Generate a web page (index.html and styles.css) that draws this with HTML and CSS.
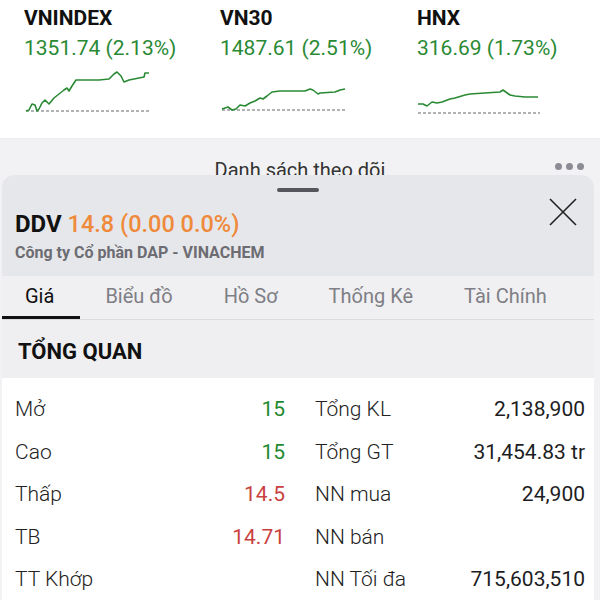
FILE: index.html
```html
<!DOCTYPE html>
<html lang="vi">
<head>
<meta charset="utf-8">
<link rel="stylesheet" href="styles.css">
</head>
<body>
<div class="page">
  <section class="indices">
    <div class="index">
      <div class="idx-name">VNINDEX</div>
      <div class="idx-value">1351.74 (2.13%)</div>
      <svg class="spark" width="135" height="56" viewBox="0 0 135 56">
        <line x1="2" y1="51" x2="126" y2="51" class="base"/>
        <polyline class="line" points="2,51 5,50 8,44 11,45 13,51 15,49 18,43 21,40 25,44 30,38 35,34 40,30 43,28 45,31 48,26 52,20 75,20 85,19 90,14 93,12 97,16 100,22 105,20 115,18 120,17 121,13 125,13"/>
      </svg>
    </div>
    <div class="index">
      <div class="idx-name">VN30</div>
      <div class="idx-value">1487.61 (2.51%)</div>
      <svg class="spark" width="135" height="56" viewBox="0 0 135 56">
        <line x1="2" y1="50" x2="125" y2="50" class="base"/>
        <polyline class="line" points="2,49 8,47 12,50 16,49 20,45 25,46 30,43 35,41 40,38 43,39 47,36 52,32 60,31 85,31 90,29 93,30 98,34 100,33 115,32 120,30 125,29"/>
      </svg>
    </div>
    <div class="index">
      <div class="idx-name">HNX</div>
      <div class="idx-value">316.69 (1.73%)</div>
      <svg class="spark" width="135" height="56" viewBox="0 0 135 56">
        <line x1="1" y1="53" x2="123" y2="53" class="base"/>
        <polyline class="line" points="1,44 6,44 10,46 15,42 20,43 25,42 33,39 38,38 48,35 53,34 83,32 86,30 93,35 98,36 108,37 121,37"/>
      </svg>
    </div>
  </section>

  <section class="watch">
    <div class="watch-title">Danh sách theo dõi</div>
    <div class="dots"><span></span><span></span><span></span></div>
  </section>

  <div class="sheet">
    <header class="sheet-head">
      <div class="handle"></div>
      <div class="head-row">
        <div class="head-info">
          <div class="title"><span class="sym">DDV</span> <span class="price">14.8 (0.00 0.0%)</span></div>
          <div class="company">Công ty Cổ phần DAP - VINACHEM</div>
        </div>
        <svg class="close" width="30" height="30" viewBox="0 0 30 30">
          <path d="M2 2 L28 28 M28 2 L2 28" />
        </svg>
      </div>
    </header>

    <nav class="tabs">
      <div class="tab active">Giá</div>
      <div class="tab">Biểu đồ</div>
      <div class="tab">Hồ Sơ</div>
      <div class="tab">Thống Kê</div>
      <div class="tab">Tài Chính</div>
      <div class="tab">Sự kiện</div>
    </nav>

    <div class="section-title">TỔNG QUAN</div>

    <div class="stats">
      <div class="col">
        <div class="row"><span class="lbl">Mở</span><span class="val up">15</span></div>
        <div class="row"><span class="lbl">Cao</span><span class="val up">15</span></div>
        <div class="row"><span class="lbl">Thấp</span><span class="val down">14.5</span></div>
        <div class="row"><span class="lbl">TB</span><span class="val down">14.71</span></div>
        <div class="row"><span class="lbl">TT Khớp</span><span class="val"></span></div>
      </div>
      <div class="col">
        <div class="row"><span class="lbl">Tổng KL</span><span class="val">2,138,900</span></div>
        <div class="row"><span class="lbl">Tổng GT</span><span class="val">31,454.83 tr</span></div>
        <div class="row"><span class="lbl">NN mua</span><span class="val">24,900</span></div>
        <div class="row"><span class="lbl">NN bán</span><span class="val"></span></div>
        <div class="row"><span class="lbl">NN Tối đa</span><span class="val">715,603,510</span></div>
      </div>
    </div>
  </div>
</div>
</body>
</html>
```
FILE: styles.css
```css
* { box-sizing: border-box; }
html, body { margin: 0; padding: 0; }
body {
  font-family: Roboto, "Noto Sans", "Liberation Sans", sans-serif;
  color: #1d1d1f;
  background: #f7f7f8;
}
.page {
  position: relative;
  width: 600px;
  height: 600px;
  overflow: hidden;
  background: #ffffff;
}

/* indices */
.indices {
  display: grid;
  grid-template-columns: 196px 197px 1fr;
  padding: 5px 0 0 24px;
  height: 138px;
  background: #ffffff;
}
.idx-name {
  font-size: 21px;
  font-weight: 700;
  line-height: 26px;
  color: #111;
}
.idx-value {
  font-size: 21px;
  line-height: 26px;
  margin-top: 4px;
  color: #2a8a34;
}
.spark {
  display: block;
  margin-top: -1px;
}
.spark .line {
  fill: none;
  stroke: #2a8a34;
  stroke-width: 1.6;
  stroke-linejoin: round;
}
.spark .base {
  stroke: #666;
  stroke-width: 1;
  stroke-dasharray: 3 2;
}

/* watch band */
.watch {
  position: relative;
  display: flex;
  align-items: flex-start;
  justify-content: center;
  height: 462px;
  background: #f2f2f4;
  border-top: 1px solid #ececee;
  padding-top: 18px;
}
.watch-title {
  font-size: 20px;
  line-height: 26px;
  color: #333;
}
.dots {
  position: absolute;
  right: 16px;
  top: 24px;
  display: flex;
  gap: 4px;
}
.dots span {
  width: 7px;
  height: 7px;
  border-radius: 50%;
  background: #8c8c94;
}

/* sheet */
.sheet {
  position: absolute;
  top: 175px;
  left: 2px;
  right: 6px;
  bottom: 0;
  background: #ffffff;
  border-radius: 12px 12px 0 0;
  overflow: hidden;
}
.sheet-head {
  background: #e6e7ea;
  padding: 13px 0 11px 0;
  height: 101px;
}
.handle {
  width: 42px;
  height: 4px;
  border-radius: 2px;
  background: #55565c;
  margin: 0 auto;
}
.head-row {
  display: flex;
  justify-content: space-between;
  padding: 0 16px 0 13px;
}
.head-info {
  padding-top: 17px;
}
.title {
  font-size: 24px;
  line-height: 30px;
  white-space: nowrap;
}
.sym {
  font-weight: 700;
  color: #111;
}
.price {
  font-weight: 500;
  font-size: 23.5px;
  color: #ef8a3b;
}
.company {
  font-size: 16px;
  line-height: 22px;
  font-weight: 700;
  color: #6c6c72;
  margin-top: 3px;
}
.close {
  margin-top: 5px;
  fill: none;
  stroke: #222;
  stroke-width: 1.6;
}

/* tabs */
.tabs {
  display: flex;
  height: 44px;
  background: #f0f0f2;
  border-bottom: 1px solid #dcdce0;
  white-space: nowrap;
}
.tab {
  flex: none;
  padding: 0 25.5px;
  height: 43px;
  line-height: 41px;
  font-size: 20px;
  color: #7e7e85;
  border-bottom: 3px solid transparent;
}
.tab:first-child {
  padding-left: 23px;
}
.tab.active {
  color: #111;
  border-bottom-color: #111;
}

.section-title {
  height: 58px;
  line-height: 64px;
  padding-left: 16px;
  font-size: 22px;
  font-weight: 700;
  background: #efeff1;
  color: #111;
}

/* stats */
.stats {
  display: grid;
  grid-template-columns: 300px 292px;
  padding-top: 10px;
  background: #ffffff;
}
.col {
  display: flex;
  flex-direction: column;
}
.col:first-child {
  padding: 0 17px 0 13px;
}
.col:last-child {
  padding: 0 9px 0 13px;
}
.row {
  display: flex;
  justify-content: space-between;
  height: 42.5px;
  line-height: 42.5px;
  font-size: 21px;
}
.lbl { color: #222; font-weight: 300; }
.val { color: #1d1d1f; }
.val.up { color: #1f8a2f; }
.val.down { color: #c9413f; }
```
